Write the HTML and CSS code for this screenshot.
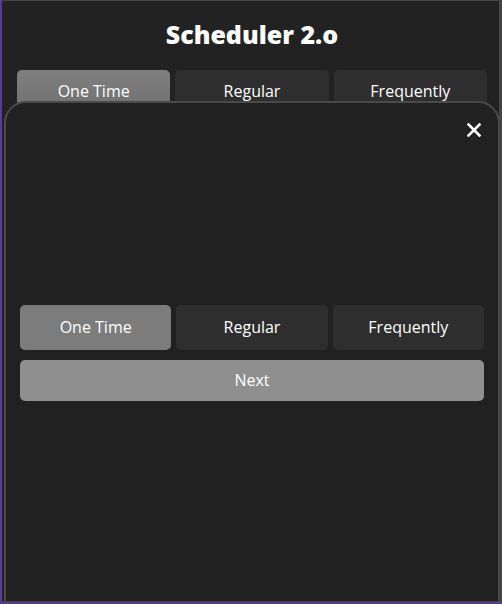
FILE: index.html
```html
<!DOCTYPE html>
<html>
<head>
<meta charset="utf-8">
<link rel="stylesheet" href="styles.css">
</head>
<body>
<div class="app">
  <h1 class="title">Scheduler 2.o</h1>
  <div class="tabs">
    <button class="tab active">One Time</button>
    <button class="tab">Regular</button>
    <button class="tab">Frequently</button>
  </div>
  <div class="modal">
    <button class="close" aria-label="Close">
      <svg width="14" height="14" viewBox="0 0 14 14"><path d="M1.5 1.5 L12.5 12.5 M12.5 1.5 L1.5 12.5" stroke="#fff" stroke-width="2.6" stroke-linecap="square"/></svg>
    </button>
    <div class="modal-body">
      <div class="tabs modal-tabs">
        <button class="tab active">One Time</button>
        <button class="tab">Regular</button>
        <button class="tab">Frequently</button>
      </div>
      <button class="next">Next</button>
    </div>
  </div>
</div>
</body>
</html>
```
FILE: styles.css
```css
html, body {
  margin: 0;
  padding: 0;
  height: 100%;
}
body {
  background: #5a3a92;
  font-family: "Open Sans", "DejaVu Sans", sans-serif;
  overflow: hidden;
}
.app {
  position: relative;
  margin-left: 2px;
  width: 500px;
  height: 602px;
  background: #222222;
  border-top: 1px solid #444444;
  border-right: 3px solid #444444;
  border-bottom: 1px solid #444444;
  padding: 0 12px 0 15px;
  box-sizing: border-box;
  overflow: hidden;
}
.title {
  margin: 0;
  padding-top: 18px;
  height: 49px;
  box-sizing: border-box;
  text-align: center;
  color: #fff;
  font-weight: 800;
  font-size: 25px;
  line-height: 30px;
}
.tabs {
  display: flex;
  gap: 5px;
  margin-top: 20px;
}
.tab {
  flex: 1;
  height: 44px;
  border: none;
  border-radius: 5px;
  background: #2e2e2e;
  color: #fff;
  font-family: inherit;
  font-size: 16px;
  font-weight: 500;
  padding: 0 0 2px;
}
.tab.active {
  background: linear-gradient(#808080, #6e6e6e);
}
.modal {
  position: absolute;
  left: 2px;
  top: 100px;
  width: 496px;
  height: 520px;
  box-sizing: border-box;
  background: #212121;
  border: 2px solid #4a4a4a;
  border-radius: 22px;
  display: flex;
  flex-direction: column;
  padding: 202px 14px 0;
}
.close {
  position: absolute;
  top: 20px;
  right: 17px;
  width: 14px;
  height: 14px;
  padding: 0;
  border: none;
  background: none;
  display: flex;
}
.modal-body {
  display: flex;
  flex-direction: column;
  gap: 10px;
}
.modal-tabs {
  margin-top: 0;
}
.modal-tabs .tab {
  height: 45px;
}
.modal-tabs .tab.active {
  background: #7c7c7c;
}
.next {
  height: 41px;
  border: none;
  border-radius: 5px;
  background: #8f8f8f;
  color: #fff;
  font-family: inherit;
  font-size: 16px;
  font-weight: 500;
  padding: 0 0 2px;
}
```
